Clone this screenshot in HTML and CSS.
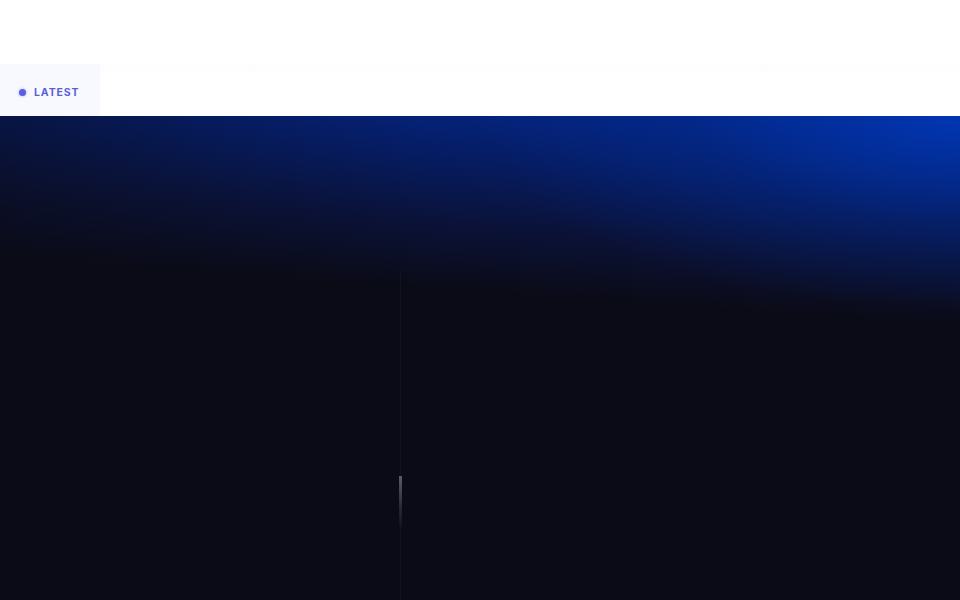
FILE: index.html
```html
<!DOCTYPE html>
<html>
<head>
<meta charset="utf-8">
<link rel="stylesheet" href="styles.css">
</head>
<body>
<header class="top">
  <nav class="tabs">
    <div class="tab"><span class="dot"></span><span class="tab-label">LATEST</span></div>
  </nav>
</header>
<section class="hero">
  <div class="spacer"></div>
  <div class="track"><div class="thumb"></div></div>
</section>
</body>
</html>
```
FILE: styles.css
```css
html, body { margin: 0; padding: 0; }
body {
  width: 960px;
  height: 600px;
  overflow: hidden;
  background: #0b0b17;
  font-family: "Inter", "Liberation Sans", sans-serif;
}
.top {
  height: 116px;
  background: #ffffff;
  display: flex;
  flex-direction: column;
  justify-content: flex-end;
}
.tabs {
  height: 52px;
  display: flex;
  background: linear-gradient(180deg, #fdfdfe 0%, #ffffff 30%);
}
.tab {
  width: 100px;
  display: flex;
  align-items: center;
  gap: 8px;
  padding: 4px 0 0 19px;
  box-sizing: border-box;
  background: #f8f9fe;
}
.dot {
  width: 7px;
  height: 7px;
  border-radius: 50%;
  background: #5b5ee8;
  box-shadow: 0 0 3px rgba(91, 94, 232, 0.5);
}
.tab-label {
  font-size: 10.5px;
  font-weight: 700;
  letter-spacing: 0.9px;
  color: #5a60d8;
}
.hero {
  height: 484px;
  display: flex;
  padding-top: 154px;
  box-sizing: border-box;
  background-color: #0b0b17;
  background-image:
    linear-gradient(90deg, rgba(11, 11, 23, 0.45) 0%, rgba(11, 11, 23, 0.15) 25%, rgba(11, 11, 23, 0) 45%),
    radial-gradient(ellipse 50% 40% at 100% 0%, rgba(0, 58, 190, 0.75) 0%, rgba(0, 48, 160, 0.3) 55%, rgba(11, 11, 23, 0) 100%),
    linear-gradient(184deg, #03288c 0%, #061c62 14%, #0a1238 26%, #0b0b17 38%, #0b0b17 100%);
}
.spacer { width: 400px; }
.track {
  width: 1px;
  position: relative;
  background: rgba(255, 255, 255, 0.03);
}
.thumb {
  position: absolute;
  left: -1px;
  top: 206px;
  width: 3px;
  height: 51px;
  background: linear-gradient(180deg, rgba(150, 155, 175, 0.55) 0%, rgba(90, 94, 115, 0.35) 60%, rgba(60, 62, 80, 0.08) 100%);
}
```
